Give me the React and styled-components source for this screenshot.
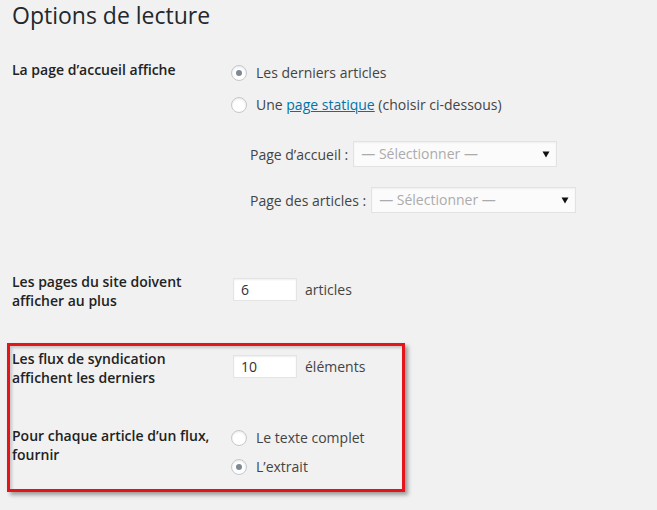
import React from "react";
import styled, { createGlobalStyle } from "styled-components";

const GlobalStyle = createGlobalStyle`
  html, body {
    margin: 0;
    padding: 0;
    background: #f1f1f1;
  }
  body {
    font-family: "Open Sans", "Noto Sans", sans-serif;
    color: #444;
    font-size: 14px;
  }
`;

const Page = styled.div`
  position: relative;
  width: 657px;
  height: 510px;
  padding: 0 12px;
  box-sizing: border-box;
  overflow: hidden;
`;

const Title = styled.h1`
  margin: 0;
  font-size: 23px;
  line-height: 31px;
  font-weight: 400;
  color: #23282d;
`;

const Row = styled.div`
  display: grid;
  grid-template-columns: 219px 1fr;
  margin-top: ${(p) => p.gap}px;
`;

const Label = styled.div`
  font-weight: 600;
  color: #222;
  line-height: 19px;
  padding-top: 1px;
`;

const Field = styled.div`
  display: flex;
  flex-direction: column;
  padding-top: ${(p) => p.top || 0}px;
`;

const Option = styled.label`
  display: flex;
  align-items: center;
  gap: 9px;
  line-height: 20px;
  margin-top: ${(p) => p.gap || 0}px;
`;

const Radio = styled.span`
  width: 16px;
  height: 16px;
  box-sizing: border-box;
  border-radius: 50%;
  border: 1px solid #c4c8cc;
  background: #fff;
  box-shadow: inset 0 1px 2px rgba(0, 0, 0, 0.1);
  display: flex;
  align-items: center;
  justify-content: center;
  &::after {
    content: "";
    width: 6px;
    height: 6px;
    border-radius: 50%;
    background: ${(p) => (p.checked ? "#7e8993" : "transparent")};
  }
`;

const Link = styled.a`
  color: #0073aa;
  text-decoration: underline;
`;

const SelectRow = styled.div`
  display: flex;
  align-items: center;
  gap: 5px;
  padding-left: 19px;
  margin-top: ${(p) => p.gap}px;
`;

const SelectBox = styled.div`
  width: ${(p) => p.w}px;
  height: 26px;
  box-sizing: border-box;
  background: #fbfbfb;
  border: 1px solid #e2e2e2;
  box-shadow: inset 0 1px 2px rgba(0, 0, 0, 0.05);
  display: flex;
  align-items: center;
  justify-content: space-between;
  padding: 0 6px 0 7px;
  color: #ababab;
  line-height: 20px;
`;

const Inline = styled.div`
  display: flex;
  align-items: center;
  gap: 8px;
  padding-left: 2px;
`;

const NumberInput = styled.div`
  width: 64px;
  height: 23px;
  box-sizing: border-box;
  background: #fff;
  border: 1px solid #e4e4e4;
  box-shadow: inset 0 1px 2px rgba(0, 0, 0, 0.07);
  padding-left: 7px;
  line-height: 21px;
  color: #333;
`;

const Highlight = styled.div`
  position: absolute;
  left: 7px;
  top: 343px;
  width: 398px;
  height: 149px;
  box-sizing: border-box;
  border: 3px solid #e5141b;
  box-shadow: 3px 3px 4px rgba(0, 0, 0, 0.35),
    inset 2px 2px 3px rgba(0, 0, 0, 0.18);
  pointer-events: none;
`;

const Arrow = () => (
  <svg width="8" height="8" viewBox="0 0 8 8">
    <path d="M0.5 1.5 H7.5 L4 7.5 Z" fill="#111" />
  </svg>
);

const Select = ({ w }) => (
  <SelectBox w={w}>
    <span>— Sélectionner —</span>
    <Arrow />
  </SelectBox>
);

export default function App() {
  return (
    <>
      <GlobalStyle />
      <Page>
        <Title>Options de lecture</Title>

        <Row gap={28}>
          <Label>La page d’accueil affiche</Label>
          <Field top={4}>
            <Option>
              <Radio checked />
              Les derniers articles
            </Option>
            <Option gap={12}>
              <Radio />
              <span>
                Une <Link>page statique</Link> (choisir ci-dessous)
              </span>
            </Option>
            <SelectRow gap={26}>
              Page d’accueil :
              <Select w={204} />
            </SelectRow>
            <SelectRow gap={20}>
              Page des articles :
              <Select w={205} />
            </SelectRow>
          </Field>
        </Row>

        <Row gap={58}>
          <Label>
            Les pages du site doivent
            <br />
            afficher au plus
          </Label>
          <Field top={7}>
            <Inline>
              <NumberInput>6</NumberInput>
              articles
            </Inline>
          </Field>
        </Row>

        <Row gap={38}>
          <Label>
            Les flux de syndication
            <br />
            affichent les derniers
          </Label>
          <Field top={7}>
            <Inline>
              <NumberInput>10</NumberInput>
              éléments
            </Inline>
          </Field>
        </Row>

        <Row gap={38}>
          <Label>
            Pour chaque article d’un flux,
            <br />
            fournir
          </Label>
          <Field top={3}>
            <Option>
              <Radio />
              Le texte complet
            </Option>
            <Option gap={9}>
              <Radio checked />
              L’extrait
            </Option>
          </Field>
        </Row>

        <Highlight />
      </Page>
    </>
  );
}
